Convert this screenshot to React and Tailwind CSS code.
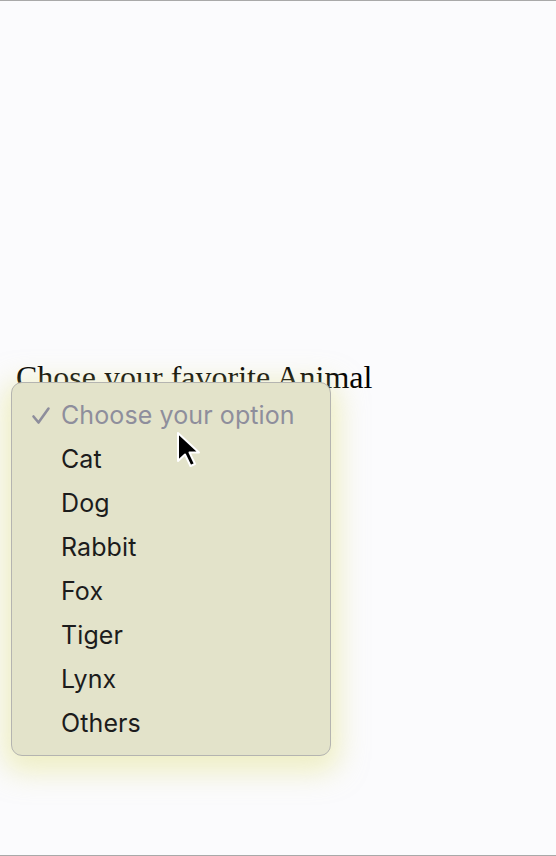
import React from "react";

const options = ["Cat", "Dog", "Rabbit", "Fox", "Tiger", "Lynx", "Others"];

export default function App() {
  return (
    <div className="relative min-h-[856px] w-[556px] bg-[#fbfbfd] border-t border-b border-[#a9a9a9] box-border overflow-hidden">
      <div className="pt-[358px] pl-4">
        <h1 className="text-[32px] leading-[37px] text-black font-['Liberation_Serif','Times_New_Roman',serif] font-normal">
          Chose your favorite Animal
        </h1>
      </div>
      <div className="absolute left-[11px] top-[381px] w-[320px] h-[374px] pt-[11px] rounded-[11px] border border-[#b4b4b0] bg-[#e3e3ca] shadow-[0_8px_28px_8px_rgba(228,228,140,0.5)] font-['Inter','Helvetica',sans-serif] text-[25px]">
        <div className="flex items-center h-[44px] text-[#8e8e9c]">
          <span className="w-[49px] pl-[19px] flex items-center">
            <svg width="20" height="20" viewBox="0 0 20 20">
              <path d="M2.5 10.5 L7.5 16.5 L17.5 2.5" fill="none" stroke="#8e8e9c" strokeWidth="2.6" strokeLinecap="round" strokeLinejoin="round" />
            </svg>
          </span>
          <span className="tracking-[0.1px]">Choose your option</span>
        </div>
        {options.map((o) => (
          <div key={o} className="flex items-center h-[44px] text-[#1c1c1c]">
            <span className="w-[49px]"></span>
            <span className="tracking-[0.1px]">{o}</span>
          </div>
        ))}
      </div>
      <svg className="absolute left-[175px] top-[430px]" width="32" height="42" viewBox="0 0 32 42">
        <path d="M3 2 L3 30 L10 23.5 L15.5 35 L20 33 L14.5 21.5 L24 21.5 Z" fill="#000" stroke="#fff" strokeWidth="2" strokeLinejoin="round" />
      </svg>
    </div>
  );
}
